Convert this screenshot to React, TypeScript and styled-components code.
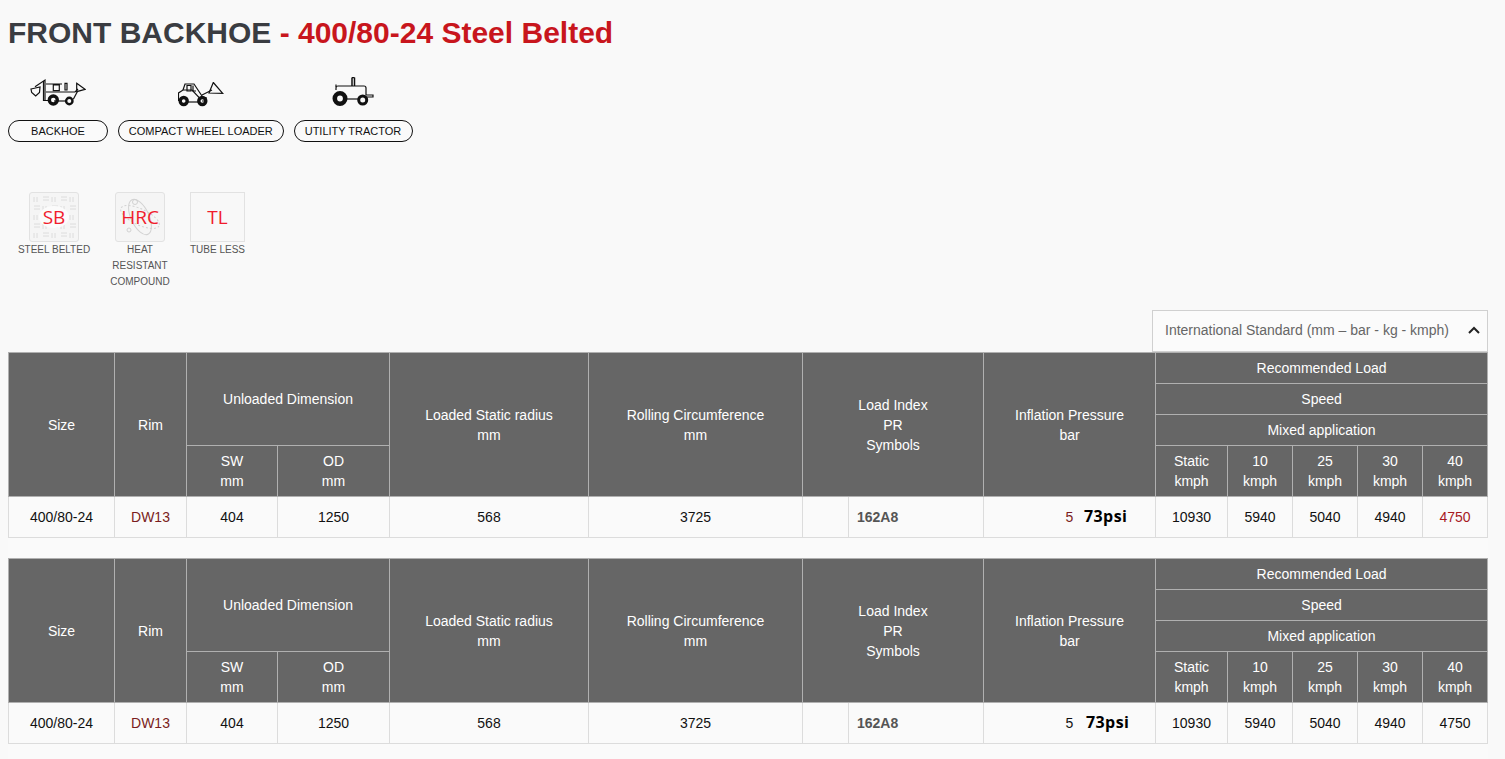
import React from 'react';
import styled, { createGlobalStyle } from 'styled-components';

const GlobalStyle = createGlobalStyle`
  html, body {
    margin: 0;
    padding: 0;
    background: #f9f9f9;
    font-family: "Liberation Sans", Arial, sans-serif;
    overflow: hidden;
  }
`;

const Page = styled.div`
  width: 1480px;
  padding: 0 0 0 8px;
`;

const Title = styled.h1`
  margin: 0;
  padding-top: 15px;
  font-size: 30px;
  line-height: 36px;
  font-weight: 700;
  color: #3a3c41;
`;

const TitleAccent = styled.span`
  color: #c8161d;
`;

const VehicleRow = styled.div`
  display: flex;
  gap: 9.5px;
  margin-top: 23px;
`;

const Vehicle = styled.div`
  display: flex;
  flex-direction: column;
  align-items: center;
`;

const VehicleIcon = styled.div`
  height: 46px;
  padding-bottom: 12px;
  box-sizing: border-box;
  display: flex;
  align-items: flex-end;
  justify-content: center;
`;

const Chip = styled.span<{ $minWidth?: number }>`
  box-sizing: border-box;
  height: 22px;
  min-width: ${(p) => p.$minWidth || 0}px;
  padding: 0 10px;
  border: 1px solid #111;
  border-radius: 11px;
  font-size: 11px;
  line-height: 20px;
  text-align: center;
  color: #111;
  background: #fafafa;
`;

const FeatureRow = styled.div`
  display: flex;
  gap: 20px;
  align-items: flex-start;
  padding-left: 10px;
  margin-top: 50px;
`;

const Feature = styled.div<{ $width: number }>`
  width: ${(p) => p.$width}px;
  display: flex;
  flex-direction: column;
  align-items: center;
`;

const FeatureBadge = styled.div<{ $wide?: boolean }>`
  position: relative;
  box-sizing: border-box;
  width: ${(p) => (p.$wide ? 55 : 50)}px;
  height: 50px;
  border: 1px solid #e2e2e2;
  border-radius: ${(p) => (p.$wide ? 0 : 3)}px;
  background: ${(p) => (p.$wide ? '#f8f8f8' : '#f5f5f5')};
  display: flex;
  align-items: center;
  justify-content: center;
`;

const BadgeArt = styled.svg`
  position: absolute;
  left: 0;
  top: 0;
`;

const BadgeText = styled.span`
  position: relative;
  font-family: "Open Sans", sans-serif;
  font-size: 19px;
  color: #f01c2c;
`;

const FeatureLabel = styled.div<{ $wrap?: boolean }>`
  font-size: 10px;
  line-height: 16px;
  text-align: center;
  white-space: ${(p) => (p.$wrap ? 'normal' : 'nowrap')};
  color: #555;
`;

const SelectRow = styled.div`
  display: flex;
  justify-content: flex-end;
  margin-top: 20px;
`;

const UnitSelect = styled.div`
  box-sizing: border-box;
  width: 336px;
  height: 42px;
  padding: 0 7px 2px 12px;
  display: flex;
  align-items: center;
  justify-content: space-between;
  background: #fbfbfb;
  border: 1px solid #d0d0d0;
  font-size: 14px;
  color: #666;
`;

const Table = styled.table`
  width: 1480px;
  table-layout: fixed;
  border-collapse: collapse;
  font-size: 14px;
  background: #fafafa;
`;

const Head = styled.th`
  height: 20px;
  padding: 5px 2px;
  background: #666;
  color: #fff;
  font-weight: 400;
  line-height: 20px;
  text-align: center;
  border: 1px solid #b0b0b0;
`;

const Cell = styled.td<{ $tone?: 'red' | 'dark' }>`
  position: relative;
  height: 30px;
  padding: 5px 2px;
  line-height: 20px;
  text-align: center;
  border: 1px solid #dcdcdc;
  border-top-color: #b0b0b0;
  color: ${(p) => (p.$tone === 'red' ? '#a8191f' : p.$tone === 'dark' ? '#7a1c20' : '#111')};
`;

const IndexCell = styled(Cell)`
  padding-left: 8px;
  text-align: left;
  font-weight: 700;
  color: #555;
  border-left-color: #c4c4c4;
`;

const Psi = styled.b<{ $left: number }>`
  position: absolute;
  left: ${(p) => p.$left}px;
  top: 9px;
  font-family: "Open Sans", sans-serif;
  font-size: 16px;
  letter-spacing: 0.4px;
  line-height: 20px;
  color: #000;
`;

const Spacer = styled.td`
  height: 20px;
  padding: 0;
  border: 0;
`;

const widths = [106, 72, 91, 112, 199, 214, 46, 135, 172, 72, 65, 65, 65, 65];

const BackhoeIcon = () => (
  <svg width="56" height="30" viewBox="0 0 56 30" fill="none" stroke="#111" strokeWidth="1.2">
    <path d="M1 11 L10 9 L9.5 14.5 L5.7 18 L1.7 14.5 Z" />
    <path d="M5 8.7 L15 2 L15 22.5 H18" />
    <path d="M13.5 3 V22.5 H15" />
    <path d="M16 6 H32 M23.3 7 V12.7 H29.3 V7 Z" />
    <path d="M35 5.3 V12 H37 V5.3 Z" />
    <path d="M16 14 H45 L48 11" />
    <path d="M24 23 H36" />
    <path d="M43.3 21.3 L47.3 13.7" />
    <path d="M46.7 5.3 L55 11.3 L46.7 13.7 Z" />
    <circle cx="23.3" cy="22" r="4" strokeWidth="3.4" />
    <circle cx="39.3" cy="23" r="3.2" strokeWidth="2.4" />
  </svg>
);

const LoaderIcon = () => (
  <svg width="46" height="26" viewBox="0 0 46 26" fill="none" stroke="#111" strokeWidth="1.2">
    <path d="M0.5 19 V11 L5 8 H14 L21 15.5 H28 V19 H24" />
    <path d="M5 8 L7 2 H16 L24 14" />
    <path d="M9 3.5 V9 H13 V3.5 Z M15 3.5 V9 H18" />
    <path d="M10 20 H20" />
    <path d="M24 13 L34 8" />
    <path d="M35.3 0.5 L44.7 11.3 L31 11 Z" />
    <circle cx="5.7" cy="19" r="3.5" strokeWidth="3.4" />
    <circle cx="24.3" cy="19" r="3.5" strokeWidth="3.4" />
  </svg>
);

const TractorIcon = () => (
  <svg width="42" height="31" viewBox="0 0 42 31" fill="none" stroke="#111" strokeWidth="1.2">
    <path d="M4 13 V11 Q4 9 6 9 H32 Q34 9 34 11 V18 H41 V20 H35" />
    <path d="M4 7.5 V10" />
    <path d="M20 0.5 V9 M22.5 0.5 V9 M20 0.5 H22.5" strokeWidth="1.5" />
    <path d="M14 22 H26" />
    <circle cx="8" cy="21.5" r="5.2" strokeWidth="4.6" />
    <circle cx="30.7" cy="23" r="4" strokeWidth="3" />
  </svg>
);

const gridCells = [4, 13, 22, 31, 40];

const GridArt = () => (
  <BadgeArt width="48" height="48" viewBox="0 0 48 48" fill="none" stroke="#dcdcdc" strokeWidth="1">
    {gridCells.map((y) =>
      gridCells.map((x) =>
        (x + y) % 2 === 0 ? (
          <path key={`${x}-${y}`} d={`M${x} ${y} v5 M${x + 3} ${y} v5`} />
        ) : (
          <path key={`${x}-${y}`} d={`M${x} ${y} h6 M${x} ${y + 3} h6`} />
        ),
      ),
    )}
    <ellipse cx="24" cy="24" rx="15" ry="11" fill="#fbfbfb" stroke="none" />
  </BadgeArt>
);

const AtomArt = () => (
  <BadgeArt width="48" height="48" viewBox="0 0 48 48" fill="none" stroke="#d2d2d2" strokeWidth="1">
    <ellipse cx="24" cy="24" rx="9" ry="19" transform="rotate(-25 24 24)" />
    <ellipse cx="24" cy="24" rx="21" ry="8" transform="rotate(25 24 24)" strokeDasharray="2 2" />
    <circle cx="19" cy="9" r="2.5" />
    <circle cx="13" cy="37" r="2" />
  </BadgeArt>
);

const Chevron = () => (
  <svg width="12" height="8" viewBox="0 0 12 8" fill="none" stroke="#222" strokeWidth="2">
    <path d="M1 7 L6 2 L11 7" />
  </svg>
);

const TyreTable = ({ psiLeft, redLast }: { psiLeft: number; redLast?: boolean }) => (
  <Table>
    <colgroup>
      {widths.map((w, i) => (
        <col key={i} style={{ width: w }} />
      ))}
    </colgroup>
    <tbody>
      <tr>
        <Head rowSpan={4}>Size</Head>
        <Head rowSpan={4}>Rim</Head>
        <Head rowSpan={3} colSpan={2}>
          Unloaded Dimension
        </Head>
        <Head rowSpan={4}>
          Loaded Static radius
          <br />
          mm
        </Head>
        <Head rowSpan={4}>
          Rolling Circumference
          <br />
          mm
        </Head>
        <Head rowSpan={4} colSpan={2}>
          Load Index
          <br />
          PR
          <br />
          Symbols
        </Head>
        <Head rowSpan={4}>
          Inflation Pressure
          <br />
          bar
        </Head>
        <Head colSpan={5}>Recommended Load</Head>
      </tr>
      <tr>
        <Head colSpan={5}>Speed</Head>
      </tr>
      <tr>
        <Head colSpan={5}>Mixed application</Head>
      </tr>
      <tr>
        <Head>
          SW
          <br />
          mm
        </Head>
        <Head>
          OD
          <br />
          mm
        </Head>
        <Head>
          Static
          <br />
          kmph
        </Head>
        <Head>
          10
          <br />
          kmph
        </Head>
        <Head>
          25
          <br />
          kmph
        </Head>
        <Head>
          30
          <br />
          kmph
        </Head>
        <Head>
          40
          <br />
          kmph
        </Head>
      </tr>
      <tr>
        <Cell>400/80-24</Cell>
        <Cell $tone="dark">DW13</Cell>
        <Cell>404</Cell>
        <Cell>1250</Cell>
        <Cell>568</Cell>
        <Cell>3725</Cell>
        <Cell />
        <IndexCell>162A8</IndexCell>
        <Cell $tone={redLast ? 'dark' : undefined}>
          5<Psi $left={psiLeft}>73psi</Psi>
        </Cell>
        <Cell>10930</Cell>
        <Cell>5940</Cell>
        <Cell>5040</Cell>
        <Cell>4940</Cell>
        <Cell $tone={redLast ? 'red' : undefined}>4750</Cell>
      </tr>
      <tr>
        <Spacer colSpan={14} />
      </tr>
    </tbody>
  </Table>
);

export default function App() {
  return (
    <>
      <GlobalStyle />
      <Page>
        <Title>
          FRONT BACKHOE <TitleAccent>- 400/80-24 Steel Belted</TitleAccent>
        </Title>
        <VehicleRow>
          <Vehicle>
            <VehicleIcon>
              <BackhoeIcon />
            </VehicleIcon>
            <Chip $minWidth={100}>BACKHOE</Chip>
          </Vehicle>
          <Vehicle>
            <VehicleIcon>
              <LoaderIcon />
            </VehicleIcon>
            <Chip $minWidth={166.5}>COMPACT WHEEL LOADER</Chip>
          </Vehicle>
          <Vehicle>
            <VehicleIcon>
              <TractorIcon />
            </VehicleIcon>
            <Chip $minWidth={119}>UTILITY TRACTOR</Chip>
          </Vehicle>
        </VehicleRow>
        <FeatureRow>
          <Feature $width={72}>
            <FeatureBadge>
              <GridArt />
              <BadgeText>SB</BadgeText>
            </FeatureBadge>
            <FeatureLabel>STEEL BELTED</FeatureLabel>
          </Feature>
          <Feature $width={60}>
            <FeatureBadge>
              <AtomArt />
              <BadgeText>HRC</BadgeText>
            </FeatureBadge>
            <FeatureLabel $wrap>HEAT RESISTANT COMPOUND</FeatureLabel>
          </Feature>
          <Feature $width={55}>
            <FeatureBadge $wide>
              <BadgeText>TL</BadgeText>
            </FeatureBadge>
            <FeatureLabel>TUBE LESS</FeatureLabel>
          </Feature>
        </FeatureRow>
        <SelectRow>
          <UnitSelect>
            International Standard (mm – bar - kg - kmph)
            <Chevron />
          </UnitSelect>
        </SelectRow>
        <TyreTable psiLeft={100} redLast />
        <TyreTable psiLeft={102} />
      </Page>
    </>
  );
}
